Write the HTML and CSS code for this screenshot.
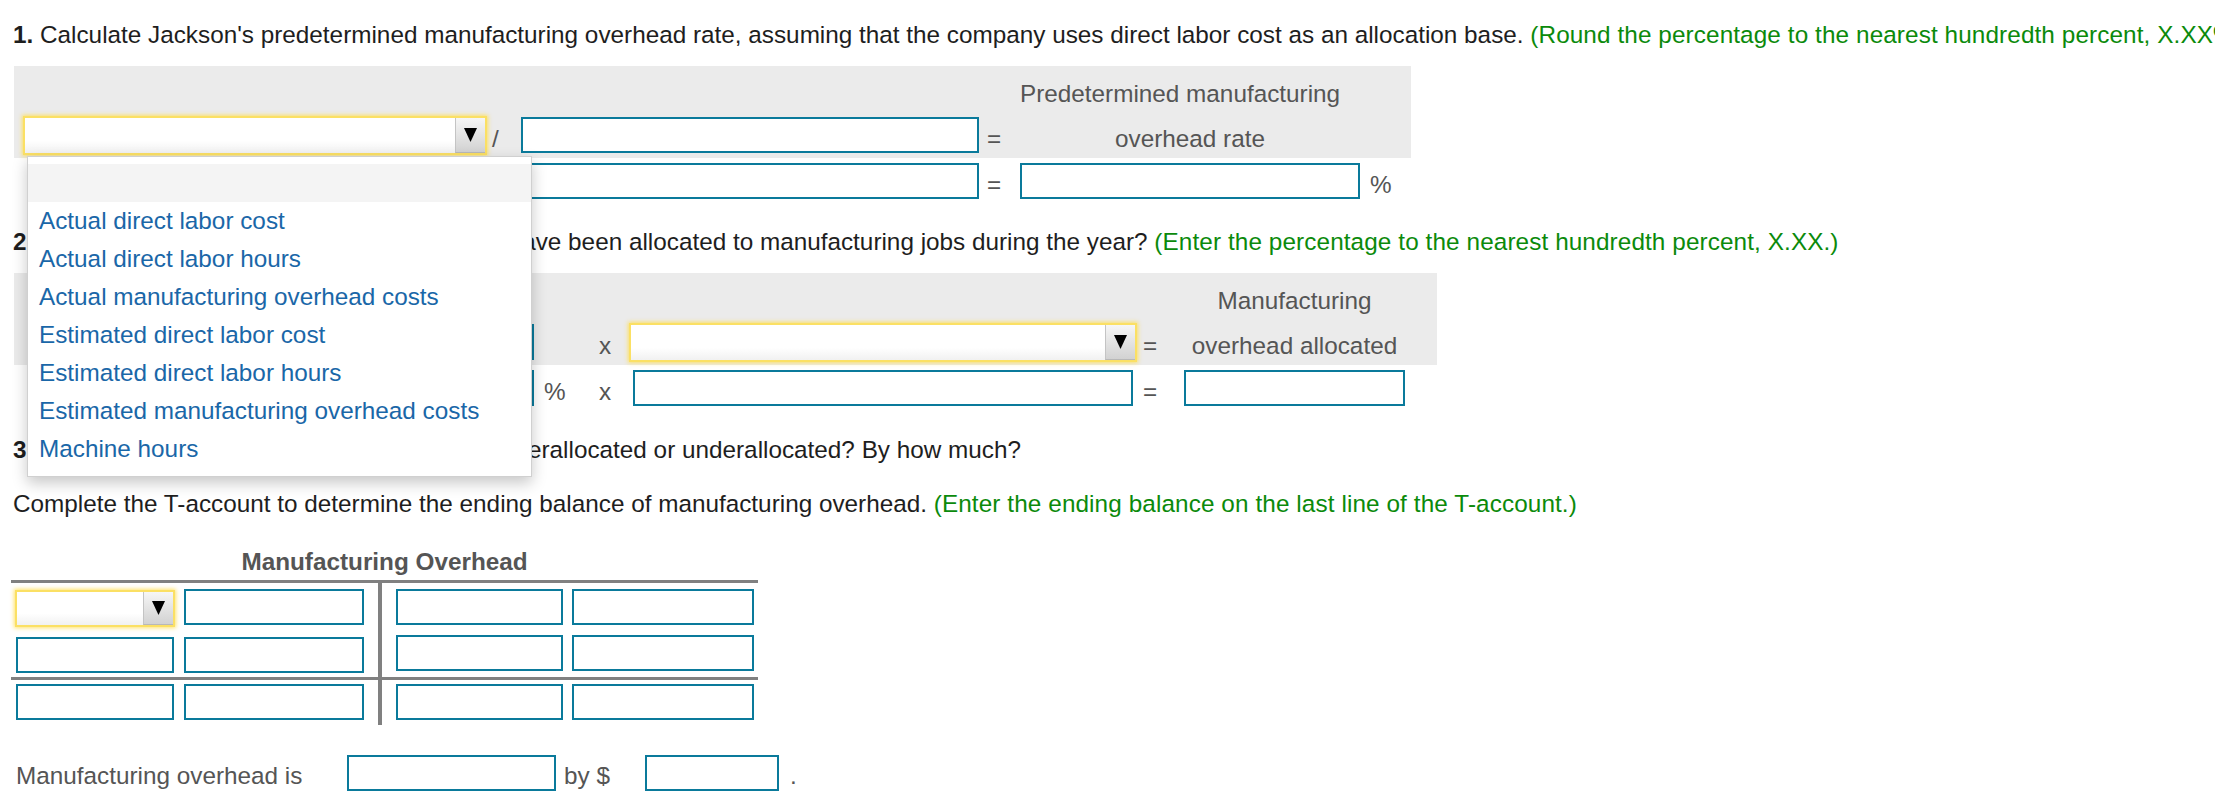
FILE: index.html
```html
<!DOCTYPE html>
<html lang="en">
<head>
<meta charset="utf-8">
<title>Manufacturing overhead</title>
<link rel="stylesheet" href="styles.css">
</head>
<body>
<div class="page">
  <p class="q q1"><b>1.</b> Calculate Jackson's predetermined manufacturing overhead rate, assuming that the company uses direct labor cost as an allocation base. <span class="hint">(Round the percentage to the nearest hundredth percent, X.XX%.)</span></p>

  <div class="eq eq1">
    <div class="band"></div>
    <div class="head c5 head-left">Predetermined manufacturing</div>

    <div class="r1 c1 dd-wrap">
      <div class="select"><span class="btn"><svg width="13" height="14" viewBox="0 0 13 14"><polygon points="0,0 13,0 6.5,14" fill="#000"/></svg></span></div>
      <ul class="list">
        <li class="opt blank"></li>
        <li class="opt">Actual direct labor cost</li>
        <li class="opt">Actual direct labor hours</li>
        <li class="opt">Actual manufacturing overhead costs</li>
        <li class="opt">Estimated direct labor cost</li>
        <li class="opt">Estimated direct labor hours</li>
        <li class="opt">Estimated manufacturing overhead costs</li>
        <li class="opt">Machine hours</li>
      </ul>
    </div>
    <span class="r1 c2 op slash">/</span>
    <input class="r1 c3 box" type="text">
    <span class="r1 c4 op eqs">=</span>
    <span class="r1 c5 lbl">overhead rate</span>

    <input class="r2 c1 box under" type="text">
    <span class="r2 c2 op slash">/</span>
    <input class="r2 c3 box" type="text">
    <span class="r2 c4 op eqs">=</span>
    <input class="r2 c5 box" type="text">
    <span class="r2 c6 op pct">%</span>
  </div>

  <p class="q q2"><b>2.</b> How much manufacturing overhead should have been allocated to manufacturing jobs during the year? <span class="hint">(Enter the percentage to the nearest hundredth percent, X.XX.)</span></p>

  <div class="eq eq2">
    <div class="band"></div>
    <div class="head c6">Manufacturing</div>

    <input class="r1 c1 box under" type="text">
    <span class="r1 c3 op times">x</span>
    <div class="r1 c4"><div class="select"><span class="btn"><svg width="13" height="14" viewBox="0 0 13 14"><polygon points="0,0 13,0 6.5,14" fill="#000"/></svg></span></div></div>
    <span class="r1 c5 op eqs2">=</span>
    <span class="r1 c6 lbl">overhead allocated</span>

    <input class="r2 c1 box under" type="text">
    <span class="r2 c2 op pct">%</span>
    <span class="r2 c3 op times">x</span>
    <input class="r2 c4 box inset" type="text">
    <span class="r2 c5 op eqs2">=</span>
    <input class="r2 c6 box" type="text">
  </div>

  <p class="q q3"><b>3.</b> Was the manufacturing overhead this year overallocated or underallocated? By how much?</p>

  <p class="q q4">Complete the T-account to determine the ending balance of manufacturing overhead. <span class="hint">(Enter the ending balance on the last line of the T-account.)</span></p>

  <div class="tacct-wrap">
    <div class="ttitle">Manufacturing Overhead</div>
    <div class="tacct">
      <div class="tcell ttop tl">
        <div class="trow">
          <div class="select sm"><span class="btn"><svg width="13" height="14" viewBox="0 0 13 14"><polygon points="0,0 13,0 6.5,14" fill="#000"/></svg></span></div>
          <input class="box wb" type="text">
        </div>
        <div class="trow">
          <input class="box wa" type="text">
          <input class="box wb" type="text">
        </div>
      </div>
      <div class="tcell ttop tr">
        <div class="trow">
          <input class="box wc" type="text">
          <input class="box wd" type="text">
        </div>
        <div class="trow">
          <input class="box wc" type="text">
          <input class="box wd" type="text">
        </div>
      </div>
      <div class="tcell tbot tl">
        <div class="trow">
          <input class="box wa" type="text">
          <input class="box wb" type="text">
        </div>
      </div>
      <div class="tcell tbot tr">
        <div class="trow">
          <input class="box wc" type="text">
          <input class="box wd" type="text">
        </div>
      </div>
    </div>
  </div>

  <div class="answer">
    <span class="alabel">Manufacturing overhead is</span>
    <input class="box a1" type="text">
    <span class="by">by $</span>
    <input class="box a2" type="text">
    <span class="dot">.</span>
  </div>
</div>
</body>
</html>
```

FILE: styles.css
```css
html, body {
  margin: 0;
  padding: 0;
  overflow: hidden;
  background: #fff;
}

body {
  font-family: "Liberation Sans", Arial, sans-serif;
  font-size: 24.3px;
  color: #1e1e1e;
}

.page {
  padding-left: 11px;
}

/* question lines */
.q {
  margin: 0;
  padding-left: 2px;
  line-height: 36px;
  white-space: nowrap;
}
.q1 { margin-top: 17px; margin-bottom: 13px; }
.q2 { margin-top: 20px; margin-bottom: 13px; }
.q3 { margin-top: 21px; }
.q4 { margin-top: 18px; }

.hint { color: #0b8a0b; letter-spacing: 0.1px; }

/* equation grids */
.eq {
  display: grid;
  margin-left: 3px;
  grid-template-rows: 50px 42px 46px;
  align-items: start;
}
.eq1 { grid-template-columns: 9px 464px 34px 458px 41px 340px 42px 9px; }
.eq2 { grid-template-columns: 9px 511px 51px 44px 508px 47px 221px 32px; }

.band {
  grid-row: 1 / 3;
  grid-column: 1 / -1;
  align-self: stretch;
  background: #ebebeb;
}

.head { grid-row: 1; }
.r1 { grid-row: 2; }
.r2 { grid-row: 3; }
.c1 { grid-column: 2; }
.c2 { grid-column: 3; }
.c3 { grid-column: 4; }
.c4 { grid-column: 5; }
.c5 { grid-column: 6; }
.c6 { grid-column: 7; }

.head {
  margin-top: 10px;
  line-height: 36px;
  text-align: center;
  color: #555;
  white-space: nowrap;
}
.head-left { text-align: left; }

.lbl {
  line-height: 36px;
  text-align: center;
  color: #555;
  margin-top: 5px;
  white-space: nowrap;
}

.op {
  line-height: 36px;
  color: #555;
}
.r1.op { margin-top: 5px; }
.r2.op { margin-top: 9px; }

.slash { padding-left: 5px; }
.eqs { padding-left: 8px; }
.eqs2 { padding-left: 6px; }
.pct { padding-left: 10px; }
.times { padding-left: 14px; }

/* inputs */
.box {
  display: block;
  box-sizing: border-box;
  height: 36px;
  margin: 0;
  padding: 0;
  border: 2px solid #0a7a9b;
  background: #fff;
  outline: none;
  font: inherit;
}
.eq .box { width: 100%; }
.r1.box { margin-top: 1px; }
.r2.box { margin-top: 5px; }
.eq .box.under { width: calc(100% - 8px); margin-left: 8px; }
.eq .inset { width: 500px; margin-left: 4px; }

/* yellow dropdown */
.dd-wrap { position: relative; }

.select {
  box-sizing: border-box;
  height: 39px;
  margin-top: 0;
  display: flex;
  justify-content: flex-end;
  border: 2px solid #fbe064;
  box-shadow: 0 0 4px 1px rgba(255, 222, 80, 0.85);
  background: linear-gradient(#ffffff 65%, #f1f1f1);
}
.select.sm {
  width: 160px;
  height: 37px;
  margin-top: 1px;
}

.btn {
  width: 29px;
  display: flex;
  align-items: center;
  justify-content: center;
  background: linear-gradient(#f6f6f6, #d2d2d2);
  border-left: 1px solid #c4c4c4;
  border-bottom: 1px solid #b8b8b8;
}
.btn svg { display: block; }

.list {
  position: absolute;
  left: 4px;
  top: 40px;
  z-index: 10;
  box-sizing: border-box;
  width: 505px;
  margin: 0;
  padding: 7px 0 8px;
  list-style: none;
  background: #fff;
  border: 1px solid #d0d0d0;
  box-shadow: 0 6px 14px rgba(0, 0, 0, 0.22);
}
.opt {
  height: 38px;
  line-height: 38px;
  padding-left: 11px;
  color: #1a67a8;
  white-space: nowrap;
}
.opt.blank { background: #f4f4f4; }

/* T-account */
.tacct-wrap {
  width: 747px;
  margin-top: 22px;
}
.ttitle {
  line-height: 36px;
  text-align: center;
  font-weight: bold;
  color: #555;
}
.tacct {
  display: grid;
  grid-template-columns: 371px 376px;
  border-top: 3px solid #808080;
}
.tcell {
  display: flex;
  flex-direction: column;
  gap: 10px;
}
.ttop { padding: 6px 0 4px; }
.tbot { padding: 4px 0 5px; border-top: 3px solid #808080; }
.tl { border-right: 4px solid #808080; padding-left: 5px; }
.tr { padding-left: 14px; }

.trow { display: flex; align-items: flex-start; }
.tl .trow { gap: 10px; }
.tr .trow { gap: 9px; }
.wa { width: 158px; }
.wb { width: 180px; }
.wc { width: 167px; }
.wd { width: 182px; }
.tl .trow .select.sm { margin-left: -1px; width: 160px; margin-right: -1px; }

/* final answer line */
.answer {
  display: flex;
  align-items: flex-start;
  margin-top: 30px;
}
.alabel {
  width: 331px;
  padding-left: 5px;
  margin-top: 3px;
  line-height: 36px;
  color: #555;
  white-space: nowrap;
}
.a1 { width: 209px; }
.by {
  width: 89px;
  padding-left: 8px;
  box-sizing: border-box;
  margin-top: 3px;
  line-height: 36px;
  color: #555;
}
.a2 { width: 134px; }
.dot {
  padding-left: 11px;
  margin-top: 3px;
  line-height: 36px;
  color: #555;
}
```
